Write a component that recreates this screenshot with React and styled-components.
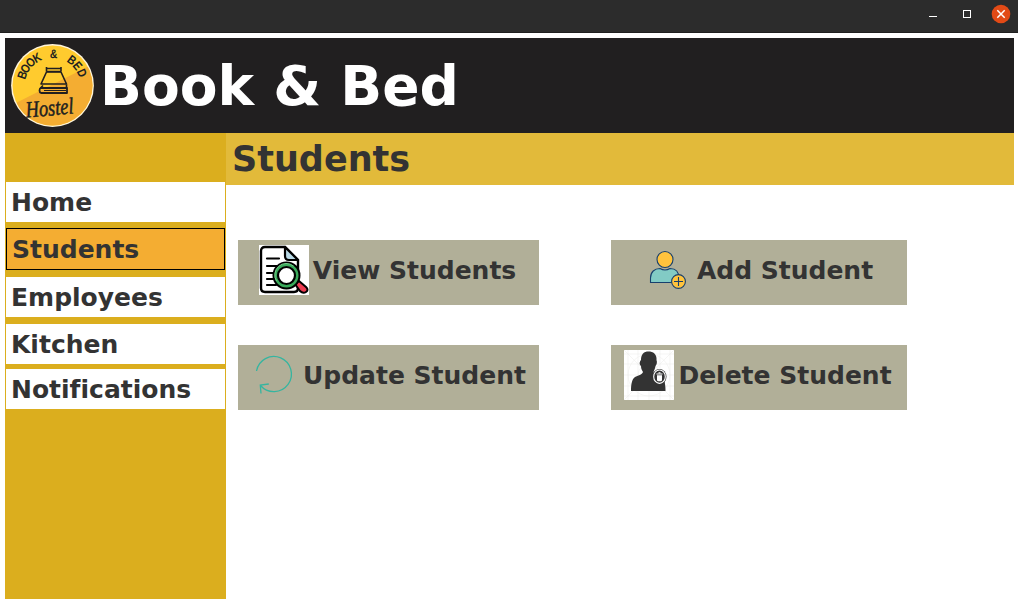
import React from 'react';
import styled, { createGlobalStyle } from 'styled-components';

const GlobalStyle = createGlobalStyle`
  * { box-sizing: border-box; }
  html, body { margin: 0; padding: 0; background: #fff; overflow: hidden; }
  body, button {
    font-family: 'DejaVu Sans', sans-serif;
    font-weight: bold;
    font-variant-ligatures: none;
    color: #333;
  }
`;

const Window = styled.div`
  display: flex;
  flex-direction: column;
  width: 1018px;
  height: 604px;
  background: #fff;
`;

const TitleBar = styled.div`
  display: flex;
  justify-content: flex-end;
  flex: 0 0 33px;
  background: #2c2c2c;
  border-bottom: 1px solid #1f1f1f;
`;

const Frame = styled.div`
  display: flex;
  flex-direction: column;
  flex: 1;
  margin: 5px 4px 5px 5px;
`;

const Header = styled.header`
  display: flex;
  align-items: center;
  flex: 0 0 95px;
  padding-left: 5px;
  background: #211f20;
`;

const Brand = styled.h1`
  margin: 0 0 0 5px;
  font-size: 55px;
  line-height: 64px;
  color: #fff;
  white-space: nowrap;
`;

const Body = styled.div`
  display: flex;
  flex: 1;
`;

const Sidebar = styled.nav`
  display: flex;
  flex-direction: column;
  flex: 0 0 221px;
  padding: 49px 1px 0;
  background: #dbae1e;
`;

const NavItem = styled.button`
  flex: none;
  height: ${(p) => (p.$active ? 42 : 40)}px;
  margin: 0 0 ${(p) => p.$gap}px;
  padding: 2px 0 0 5px;
  border: ${(p) => (p.$active ? '1px solid #000' : '0')};
  background: ${(p) => (p.$active ? '#f4ad32' : '#fff')};
  font-size: 25px;
  line-height: 38px;
  text-align: left;
`;

const Main = styled.main`
  flex: 1;
`;

const PageTitle = styled.h2`
  height: 52px;
  margin: 0;
  padding-left: 6px;
  background: #e2ba3a;
  font-size: 35px;
  line-height: 52px;
`;

const Actions = styled.div`
  display: grid;
  grid-template-columns: 301px 296px;
  grid-auto-rows: 65px;
  gap: 40px 72px;
  padding: 55px 0 0 12px;
`;

const ActionButton = styled.button`
  display: flex;
  align-items: center;
  justify-content: center;
  gap: 4px;
  padding: 0 2px 5px 0;
  border: 0;
  background: #b1af98;
  font-size: 25px;
  white-space: nowrap;

  svg { flex: none; }
`;

const ActionLabel = styled.span`
  padding-top: 2px;
  line-height: 40px;
`;

const arcLetters = [
  ['B', -70], ['O', -57], ['O', -43], ['K', -29],
  ['&', 2], ['B', 37], ['E', 51], ['D', 66],
];

function Logo() {
  return (
    <svg width="85" height="85" viewBox="0 0 85 85">
      <defs>
        <clipPath id="disc"><circle cx="42.5" cy="42.5" r="40" /></clipPath>
      </defs>
      <circle cx="42.5" cy="42.5" r="41.4" fill="#fff4d9" />
      <g clipPath="url(#disc)">
        <rect width="85" height="85" fill="#ffcb2e" />
        <path d="M0 63 85 20V85H0Z" fill="#f4ad32" />
      </g>
      <g fill="#211f20" fontFamily="Liberation Sans" fontWeight="bold" fontSize="12.5" textAnchor="middle">
        {arcLetters.map(([letter, angle], i) => (
          <text key={i} y="-28" transform={`translate(42.5 43) rotate(${angle}) scale(.84 1)`}>{letter}</text>
        ))}
      </g>
      <g fill="none" stroke="#211f20" strokeWidth="1.6" strokeLinejoin="round">
        <path d="M36.500 24v4.500M51 24v4.500M36.500 25.500H51M36.500 28.500H51" />
        <path d="M36.500 29H51l5.500 12H31Z" />
        <path d="M33 42.500l-2.500 2.500H57M56.500 41.500V45" />
        <path d="M57 45H31c-2 .5-2 4.500 0 5h26Z" strokeWidth="1.800" />
        <path d="M34 47.500h22" strokeWidth="1" />
      </g>
      <text x="15.500" y="72.500" fill="#211f20" fontFamily="Liberation Serif" fontStyle="italic" fontWeight="normal" fontSize="23" textLength="48" lengthAdjust="spacingAndGlyphs" stroke="#211f20" strokeWidth=".5" transform="rotate(-5 40 66)">Hostel</text>
    </svg>
  );
}

function ViewIcon() {
  return (
    <svg width="50" height="50" viewBox="0 0 50 50">
      <rect width="50" height="50" fill="#fff" />
      <path d="M25 2H6Q2 2 2 6v37q0 4 4 4h29q4 0 4-4V15L26 2Z" fill="#fff" stroke="#000" strokeWidth="2.400" />
      <path d="M26 2v9q0 4 4 4h9Z" fill="#b9d9e6" stroke="#000" strokeWidth="2.200" strokeLinejoin="round" />
      <path d="M8 13.500h12M8 21h12M8 28h7M8 34h6M8 40h9" stroke="#000" strokeWidth="2.200" strokeLinecap="round" />
      <path d="m36 39 4-3 7 6q3 3 0 5-3 2-6-1Z" fill="#ed3b51" stroke="#000" strokeWidth="2" />
      <circle cx="27.500" cy="30.500" r="14" fill="#000" />
      <circle cx="27.500" cy="30.500" r="12" fill="#3aaa5b" />
      <path d="M17.500 36A11.500 11.500 0 0 1 34.500 21" fill="none" stroke="#75ce8c" strokeWidth="1" />
      <circle cx="27.500" cy="30.500" r="8.500" fill="#fff" stroke="#000" strokeWidth="2.200" />
    </svg>
  );
}

function AddIcon() {
  return (
    <svg width="50" height="50" viewBox="0 0 50 50" stroke="#173f6d" strokeWidth="1.100">
      <path d="M7.500 37.500V33c0-6 4-9.500 9.500-9.500q5 3 10 0c6 0 9 4 9 10v4Z" fill="#82cbc5" />
      <circle cx="22" cy="14.500" r="8" fill="#ffc33d" />
      <circle cx="35.500" cy="36.500" r="6.900" fill="#ffc33d" />
      <path d="M35.500 32v9M31 36.500h9" fill="none" />
    </svg>
  );
}

function UpdateIcon() {
  return (
    <svg width="50" height="50" viewBox="0 0 50 50" fill="none" stroke="#35b5a0" strokeWidth="1.300">
      <path d="M7.500 21A17.600 17.600 0 1 1 11.500 35.500M12 43.500 11.300 35l8.500-1" />
    </svg>
  );
}

function DeleteIcon() {
  return (
    <svg width="50" height="50" viewBox="0 0 50 50">
      <rect width="50" height="50" fill="#fff" />
      <g fill="none" stroke="#eeeeec" strokeWidth=".6">
        <path d="M4 0v50M14 0v50M25 0v50M36 0v50M46 0v50M0 4h50M0 14h50M0 25h50M0 36h50M0 46h50M0 0l50 50M50 0 0 50" />
        <circle cx="25" cy="25" r="21" />
        <circle cx="25" cy="25" r="11" />
      </g>
      <path d="M17 10C17 4 20 1.500 24.500 1.500S33 4 32.500 10c1 2 0 5-1 6-.5 3-1.500 4-2 6 1 3 6 3 9 5 2 2 3 8 3 14H7c0-7 1-12 4-14 3-1.500 7-2 8-5-1-2-2-3-2-6-1.500-1-2-4 0-6Z" fill="#333" />
      <ellipse cx="35.500" cy="26.700" rx="7" ry="7.800" fill="#333" />
      <ellipse cx="35.500" cy="26.700" rx="5.800" ry="6.700" fill="none" stroke="#fff" strokeWidth="1.100" />
      <path d="M32.500 24h6M34.500 22.800h2" stroke="#fff" strokeWidth="1.100" />
      <path d="M33 25.200h5v4.500q0 1.500-1.200 1.500h-2.600q-1.200 0-1.200-1.500Z" fill="#fff" />
    </svg>
  );
}

function WindowControls() {
  return (
    <svg width="98" height="32" viewBox="920 0 98 32" fill="none">
      <path d="M929 16.500h8" stroke="#fff" />
      <rect x="963.500" y="10.500" width="7" height="7" stroke="#fff" />
      <circle cx="1001" cy="14" r="9.300" fill="#e24a16" />
      <path d="m997.300 10.300 7.400 7.400m0-7.400-7.400 7.400" stroke="#fff" strokeWidth="1.500" />
    </svg>
  );
}

const navItems = [
  { label: 'Home', gap: 6 },
  { label: 'Students', gap: 7, active: true },
  { label: 'Employees', gap: 7 },
  { label: 'Kitchen', gap: 5 },
  { label: 'Notifications', gap: 0 },
];

const actions = [
  { label: 'View Students', Icon: ViewIcon },
  { label: 'Add Student', Icon: AddIcon },
  { label: 'Update Student', Icon: UpdateIcon },
  { label: 'Delete Student', Icon: DeleteIcon },
];

export default function App() {
  return (
    <Window>
      <GlobalStyle />
      <TitleBar><WindowControls /></TitleBar>
      <Frame>
        <Header>
          <Logo />
          <Brand>Book &amp; Bed</Brand>
        </Header>
        <Body>
          <Sidebar>
            {navItems.map(({ label, gap, active }) => (
              <NavItem key={label} $gap={gap} $active={active}>{label}</NavItem>
            ))}
          </Sidebar>
          <Main>
            <PageTitle>Students</PageTitle>
            <Actions>
              {actions.map(({ label, Icon }) => (
                <ActionButton key={label}><Icon /><ActionLabel>{label}</ActionLabel></ActionButton>
              ))}
            </Actions>
          </Main>
        </Body>
      </Frame>
    </Window>
  );
}
